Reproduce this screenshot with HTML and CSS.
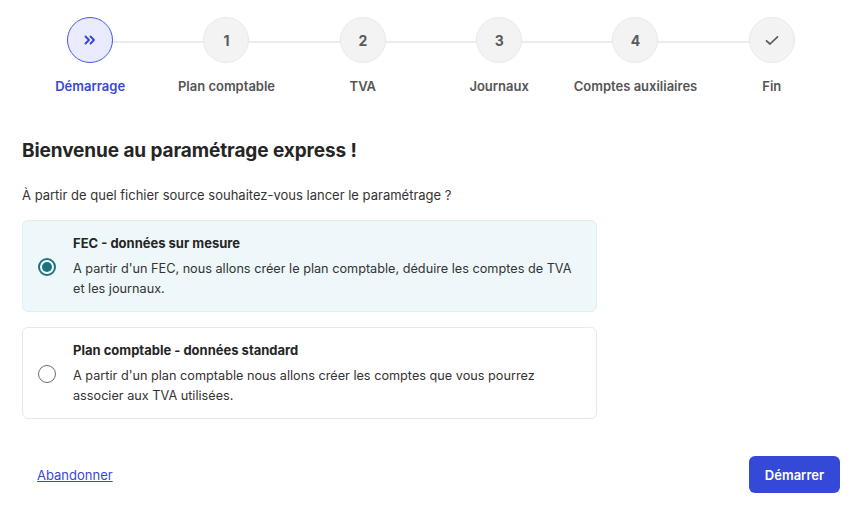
FILE: index.html
```html
<!DOCTYPE html>
<html lang="fr">
<head>
<meta charset="utf-8">
<link rel="stylesheet" href="styles.css">
</head>
<body>
<div class="page">
  <ol class="stepper">
    <li class="step active">
      <div class="track"><span class="circle"><svg width="12" height="10" viewBox="0 0 12 10"><path d="M1.5 1.5 L5 5 L1.5 8.5 M6.5 1.5 L10 5 L6.5 8.5" fill="none" stroke="currentColor" stroke-width="1.9" stroke-linecap="round" stroke-linejoin="round"/></svg></span></div>
      <span class="label">Démarrage</span>
    </li>
    <li class="step">
      <div class="track"><span class="circle">1</span></div>
      <span class="label">Plan comptable</span>
    </li>
    <li class="step">
      <div class="track"><span class="circle">2</span></div>
      <span class="label">TVA</span>
    </li>
    <li class="step">
      <div class="track"><span class="circle">3</span></div>
      <span class="label">Journaux</span>
    </li>
    <li class="step">
      <div class="track"><span class="circle">4</span></div>
      <span class="label">Comptes auxiliaires</span>
    </li>
    <li class="step">
      <div class="track"><span class="circle"><svg width="14" height="11" viewBox="0 0 14 11"><path d="M1.5 5.8 L5 9 L12.5 1.8" fill="none" stroke="currentColor" stroke-width="1.7" stroke-linecap="round" stroke-linejoin="round"/></svg></span></div>
      <span class="label">Fin</span>
    </li>
  </ol>

  <h1 class="title">Bienvenue au paramétrage express !</h1>
  <p class="question">À partir de quel fichier source souhaitez-vous lancer le paramétrage ?</p>

  <div class="options">
    <label class="option selected">
      <span class="radio"><span class="dot"></span></span>
      <span class="option-body">
        <span class="option-title">FEC - données sur mesure</span>
        <span class="option-text">A partir d'un FEC, nous allons créer le plan comptable, déduire les comptes de TVA et les journaux.</span>
      </span>
    </label>
    <label class="option">
      <span class="radio"></span>
      <span class="option-body">
        <span class="option-title">Plan comptable - données standard</span>
        <span class="option-text">A partir d'un plan comptable nous allons créer les comptes que vous pourrez associer aux TVA utilisées.</span>
      </span>
    </label>
  </div>

  <div class="footer">
    <a class="link" href="#">Abandonner</a>
    <button class="btn">Démarrer</button>
  </div>
</div>
</body>
</html>
```
FILE: styles.css
```css
* { box-sizing: border-box; }
html, body { margin: 0; padding: 0; background: #fff; }
body {
  font-family: Inter, "Noto Sans", "Liberation Sans", sans-serif;
  color: #2b2b2b;
  -webkit-font-smoothing: antialiased;
}
.page {
  padding: 17px 27px 0 22px;
  width: 867px;
}
.stepper {
  list-style: none;
  margin: 0;
  padding: 0;
  display: grid;
  grid-template-columns: repeat(6, 1fr);
}
.step {
  display: flex;
  flex-direction: column;
  align-items: center;
}
.track {
  position: relative;
  width: 100%;
  display: flex;
  justify-content: center;
}
.track::before {
  content: "";
  position: absolute;
  top: 24px;
  left: 0;
  right: 0;
  height: 2px;
  background: #ececec;
}
.step:first-child .track::before { left: 50%; }
.step:last-child .track::before { right: 50%; }
.circle {
  position: relative;
  z-index: 1;
  width: 46px;
  height: 46px;
  border-radius: 50%;
  background: #f3f3f3;
  border: 1px solid #e9e9e9;
  display: flex;
  align-items: center;
  justify-content: center;
  font-weight: 700;
  font-size: 14px;
  color: #5a5a5a;
}
.step.active .circle {
  background: #eaecfd;
  border-color: #4a57e0;
  color: #3545d4;
}
.label {
  margin-top: 15px;
  font-size: 13px;
  font-weight: 600;
  color: #555;
  white-space: nowrap;
}
.step.active .label { color: #3848d6; }

.title {
  margin: 45px 0 0;
  font-size: 19px;
  font-weight: 700;
  color: #252525;
  letter-spacing: -0.1px;
}
.question {
  margin: 25px 0 0;
  font-size: 13px;
  color: #333;
}
.options {
  margin-top: 17px;
  width: 575px;
  display: flex;
  flex-direction: column;
  gap: 15px;
}
.option {
  display: flex;
  align-items: center;
  gap: 17px;
  padding: 13px 12px 12px 15px;
  border: 1px solid #e8e8e8;
  border-radius: 6px;
  background: #fff;
}
.option.selected {
  background: #eef8fa;
  border-color: #e1eff2;
}
.radio {
  flex: none;
  width: 18px;
  height: 18px;
  border-radius: 50%;
  border: 1.5px solid #6e6e6e;
  background: #fff;
  display: flex;
  align-items: center;
  justify-content: center;
}
.option.selected .radio { border: 2px solid #1a7480; }
.dot {
  width: 10px;
  height: 10px;
  border-radius: 50%;
  background: #1a7480;
}
.option-body {
  display: flex;
  flex-direction: column;
  max-width: 500px;
}
.option-title {
  font-size: 13px;
  font-weight: 700;
  color: #252525;
  line-height: 18px;
}
.option-text {
  margin-top: 7px;
  font-size: 12.7px;
  line-height: 20px;
  color: #333;
}
.footer {
  margin-top: 37px;
  display: flex;
  align-items: center;
  justify-content: space-between;
}
.link {
  margin-left: 15px;
  font-size: 13px;
  color: #3848d6;
  text-decoration: underline;
}
.btn {
  width: 91px;
  height: 37px;
  border: none;
  border-radius: 6px;
  background: #3549d8;
  color: #fff;
  font-family: inherit;
  font-size: 13px;
  font-weight: 600;
}
```
